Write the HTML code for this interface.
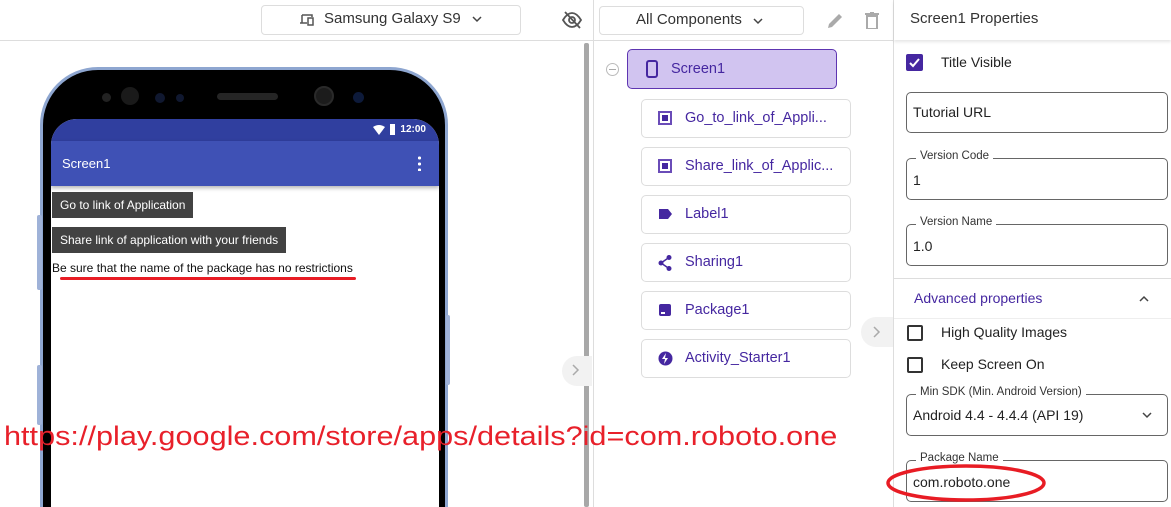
<!DOCTYPE html>
<html style="width:1171px;height:507px;overflow:hidden"><head><meta charset="utf-8"><style>
*{box-sizing:border-box;margin:0;padding:0}
body{width:1171px;height:507px;overflow:hidden;background:#fff;font-family:"Liberation Sans",sans-serif;position:relative;color:#222}
.a{position:absolute}
.box{position:absolute;border:1px solid #ddd;border-radius:4px;background:#fff}
.item{position:absolute;left:641px;width:210px;height:39px;border:1px solid #ddd;border-radius:5px;font-size:14.5px;color:#4527a0;line-height:37px;padding-left:43px}
.item svg{position:absolute;left:16px;top:11px}
.fld{position:absolute;left:906px;width:262px;border:1px solid #666;border-radius:5px;font-size:14px;color:#222;padding-left:6px}
.lbl{position:absolute;left:916px;font-size:11.5px;background:#fff;padding:0 4px;color:#333}
.cb{position:absolute;left:907px;width:16px;height:16px;border:2px solid #333;border-radius:2px}
.cbt{position:absolute;left:941px;font-size:14px;color:#222}
</style></head><body>
<div class="a" style="left:0;top:40px;width:594px;height:1px;background:#ddd"></div>
<div class="box" style="left:261px;top:5px;width:260px;height:30px"></div>
<svg class="a" style="left:299px;top:13px" width="16" height="14" viewBox="0 0 16 14"><path d="M3 2h10v2M3 2v8M1 10h7M9 5h5v7H9z" fill="none" stroke="#555" stroke-width="1.5"/></svg>
<div class="a" style="left:324px;top:10px;font-size:15px;color:#333">Samsung Galaxy S9</div>
<svg class="a" style="left:472px;top:16px" width="10" height="7"><path d="M1 1l4 4 4-4" fill="none" stroke="#444" stroke-width="1.5"/></svg>
<svg class="a" style="left:562px;top:11px" width="20" height="18" viewBox="0 0 20 18"><path d="M1 9c3-5 6-7 9-7s6 2 9 7c-3 5-6 7-9 7s-6-2-9-7z" fill="none" stroke="#555" stroke-width="1.8"/><circle cx="10" cy="9" r="3" fill="none" stroke="#555" stroke-width="1.8"/><path d="M3 1l15 16" stroke="#555" stroke-width="1.8"/></svg>
<div class="a" style="left:584px;top:43px;width:5px;height:464px;background:#a8a8a8;border-radius:2px"></div>
<div class="a" style="left:562px;top:356px;width:30px;height:30px;border-radius:15px 0 0 15px;background:#f2f2f2"></div>
<svg class="a" style="left:572px;top:364px" width="8" height="12"><path d="M1 1l5 5-5 5" fill="none" stroke="#aaa" stroke-width="1.5"/></svg>
<div class="a" style="left:593px;top:0;width:1px;height:507px;background:#ddd"></div>
<!-- phone -->
<div class="a" style="left:40px;top:67px;width:408px;height:440px;border:3px solid #8ea6d0;border-bottom:0;border-radius:58px 58px 0 0;background:#000"></div>
<div class="a" style="left:37px;top:215px;width:5px;height:75px;background:#9fb2d8;border-radius:2px"></div>
<div class="a" style="left:37px;top:365px;width:5px;height:60px;background:#9fb2d8;border-radius:2px"></div>
<div class="a" style="left:446px;top:315px;width:4px;height:70px;background:#9fb2d8;border-radius:2px"></div>
<div class="a" style="left:102px;top:93px;width:9px;height:9px;border-radius:50%;background:#222"></div>
<div class="a" style="left:121px;top:87px;width:18px;height:18px;border-radius:50%;background:#1a1a1a"></div>
<div class="a" style="left:155px;top:93px;width:10px;height:10px;border-radius:50%;background:#101830"></div>
<div class="a" style="left:176px;top:94px;width:8px;height:8px;border-radius:50%;background:#101830"></div>
<div class="a" style="left:217px;top:93px;width:61px;height:7px;border-radius:4px;background:#252525"></div>
<div class="a" style="left:314px;top:86px;width:20px;height:20px;border-radius:50%;background:#1c1c1c;border:2px solid #2a2a2a"></div>
<div class="a" style="left:353px;top:92px;width:11px;height:11px;border-radius:50%;background:#0d1a3a"></div>
<div class="a" style="left:51px;top:119px;width:388px;height:388px;background:#fff;border-radius:26px 26px 0 0;overflow:hidden">
 <div style="height:22px;background:#303f9f;position:relative"><span style="position:absolute;right:13px;top:5px;color:#fff;font-size:10px;font-weight:bold">12:00</span>
 <svg style="position:absolute;right:54px;top:6px" width="12" height="10"><path d="M0 2q6-4 12 0L6 10z" fill="#fff"/></svg>
 <div style="position:absolute;right:44px;top:5px;width:5px;height:11px;background:#fff"></div></div>
 <div style="height:45px;background:#3f51b5;position:relative;box-shadow:0 2px 4px rgba(0,0,0,.3)"><span style="position:absolute;left:11px;top:15px;color:#fff;font-size:13px">Screen1</span>
 <div style="position:absolute;right:18px;top:14px;width:3px;height:16px;background:radial-gradient(circle,#fff 1.5px,transparent 1.6px) 0 0/3px 6px"></div></div>
</div>
<div class="a" style="left:52px;top:192px;width:141px;height:26px;background:#424242;color:#fff;font-size:12px;line-height:26px;padding-left:8px">Go to link of Application</div>
<div class="a" style="left:52px;top:227px;width:234px;height:26px;background:#424242;color:#fff;font-size:12px;line-height:26px;padding-left:8px">Share link of application with your friends</div>
<div class="a" style="left:52px;top:261px;font-size:12px;color:#111">Be sure that the name of the package has no restrictions</div>
<div class="a" style="left:60px;top:277px;width:296px;height:3px;background:#e81c24;border-radius:2px"></div>
<div class="a" style="left:4px;top:420px;font-size:27px;line-height:32px;color:#e8202a;white-space:nowrap;transform:scaleX(1.135);transform-origin:0 0">https://play.google.com/store/apps/details?id=com.roboto.one</div>
<!-- components -->
<div class="a" style="left:594px;top:40px;width:300px;height:1px;background:#ddd"></div>
<div class="box" style="left:599px;top:6px;width:205px;height:29px"></div>
<div class="a" style="left:636px;top:11px;font-size:15px;color:#333">All Components</div>
<svg class="a" style="left:753px;top:18px" width="10" height="7"><path d="M1 1l4 4 4-4" fill="none" stroke="#444" stroke-width="1.5"/></svg>
<svg class="a" style="left:826px;top:12px" width="18" height="18" viewBox="0 0 18 18"><path d="M2 16l1-4L13 2l3 3L6 15z" fill="#aaa"/></svg>
<svg class="a" style="left:865px;top:12px" width="14" height="17" viewBox="0 0 14 17"><path d="M0 2h14M5 0h4M2 4h10v13H2z" fill="none" stroke="#aaa" stroke-width="2"/></svg>
<div class="a" style="left:893px;top:0;width:1px;height:507px;background:#ddd"></div>
<div class="a" style="left:606px;top:63px;width:13px;height:13px;border:1px solid #bbb;border-radius:50%"></div>
<div class="a" style="left:609px;top:69px;width:7px;height:1px;background:#aaa"></div>
<div class="a" style="left:627px;top:49px;width:210px;height:40px;background:#d1c4f0;border:1px solid #5e35b1;border-radius:5px;font-size:14.5px;color:#4527a0;line-height:38px;padding-left:43px">Screen1</div>
<svg class="a" style="left:646px;top:60px" width="12" height="18"><rect x="1" y="1" width="10" height="16" rx="2" fill="none" stroke="#4527a0" stroke-width="2"/></svg>
<div class="item" style="top:99px"><svg width="14" height="14"><rect x="1" y="1" width="12" height="12" fill="none" stroke="#6a4cb8" stroke-width="2"/><rect x="4" y="4" width="6" height="6" fill="#4527a0"/></svg>Go_to_link_of_Appli...</div>
<div class="item" style="top:147px"><svg width="14" height="14"><rect x="1" y="1" width="12" height="12" fill="none" stroke="#6a4cb8" stroke-width="2"/><rect x="4" y="4" width="6" height="6" fill="#4527a0"/></svg>Share_link_of_Applic...</div>
<div class="item" style="top:195px"><svg width="14" height="14"><path d="M1 2h9l4 5-4 5H1z" fill="#4527a0"/></svg>Label1</div>
<div class="item" style="top:243px"><svg width="14" height="16"><circle cx="11" cy="2.5" r="2.5" fill="#4527a0"/><circle cx="3" cy="8" r="2.5" fill="#4527a0"/><circle cx="11" cy="13.5" r="2.5" fill="#4527a0"/><path d="M11 2.5L3 8l8 5.5" stroke="#4527a0" fill="none" stroke-width="1.5"/></svg>Sharing1</div>
<div class="item" style="top:291px"><svg width="14" height="14"><rect x="1" y="1" width="12" height="12" rx="2" fill="#4527a0"/><rect x="3" y="9" width="4" height="2" fill="#fff"/></svg>Package1</div>
<div class="item" style="top:339px"><svg width="15" height="15"><circle cx="7.5" cy="7.5" r="7" fill="#4527a0"/><path d="M8 2L4 8h3l-1 5 4-6H7z" fill="#fff"/></svg>Activity_Starter1</div>
<div class="a" style="left:861px;top:317px;width:32px;height:30px;border-radius:15px 0 0 15px;background:#f2f2f2"></div>
<svg class="a" style="left:873px;top:326px" width="8" height="12"><path d="M1 1l5 5-5 5" fill="none" stroke="#aaa" stroke-width="1.5"/></svg>
<!-- properties -->
<div class="a" style="left:894px;top:0;width:277px;height:40px;box-shadow:0 2px 3px rgba(0,0,0,.1);background:#fff"></div>
<div class="a" style="left:910px;top:10px;font-size:15px;color:#333">Screen1 Properties</div>
<div class="a" style="left:906px;top:54px;width:17px;height:17px;background:#4527a0;border-radius:2px"></div>
<svg class="a" style="left:909px;top:57px" width="11" height="11"><path d="M1 6l3 3 6-7" fill="none" stroke="#fff" stroke-width="2"/></svg>
<div class="cbt" style="top:54px">Title Visible</div>
<div class="fld" style="top:92px;height:41px;line-height:39px">Tutorial URL</div>
<div class="fld" style="top:158px;height:42px;line-height:42px">1</div>
<div class="lbl" style="top:150px">Version Code</div>
<div class="fld" style="top:224px;height:42px;line-height:42px">1.0</div>
<div class="lbl" style="top:216px">Version Name</div>
<div class="a" style="left:894px;top:278px;width:277px;height:1px;background:#ddd"></div>
<div class="a" style="left:914px;top:290px;font-size:14px;color:#4527a0">Advanced properties</div>
<svg class="a" style="left:1139px;top:295px" width="10" height="7"><path d="M1 6l4-4 4 4" fill="none" stroke="#444" stroke-width="1.5"/></svg>
<div class="a" style="left:894px;top:318px;width:277px;height:1px;background:#eee"></div>
<div class="cb" style="top:325px"></div><div class="cbt" style="top:324px">High Quality Images</div>
<div class="cb" style="top:357px"></div><div class="cbt" style="top:356px">Keep Screen On</div>
<div class="fld" style="top:394px;height:42px;line-height:40px">Android 4.4 - 4.4.4 (API 19)</div>
<div class="lbl" style="top:386px">Min SDK (Min. Android Version)</div>
<svg class="a" style="left:1142px;top:412px" width="10" height="7"><path d="M1 1l4 4 4-4" fill="none" stroke="#444" stroke-width="1.5"/></svg>
<div class="fld" style="top:460px;height:42px;line-height:42px">com.roboto.one</div>
<div class="lbl" style="top:452px">Package Name</div>
<svg class="a" style="left:884px;top:462px" width="166" height="42"><ellipse cx="82" cy="21" rx="78" ry="17" fill="none" stroke="#e81c24" stroke-width="3.5"/></svg>
</body></html>
